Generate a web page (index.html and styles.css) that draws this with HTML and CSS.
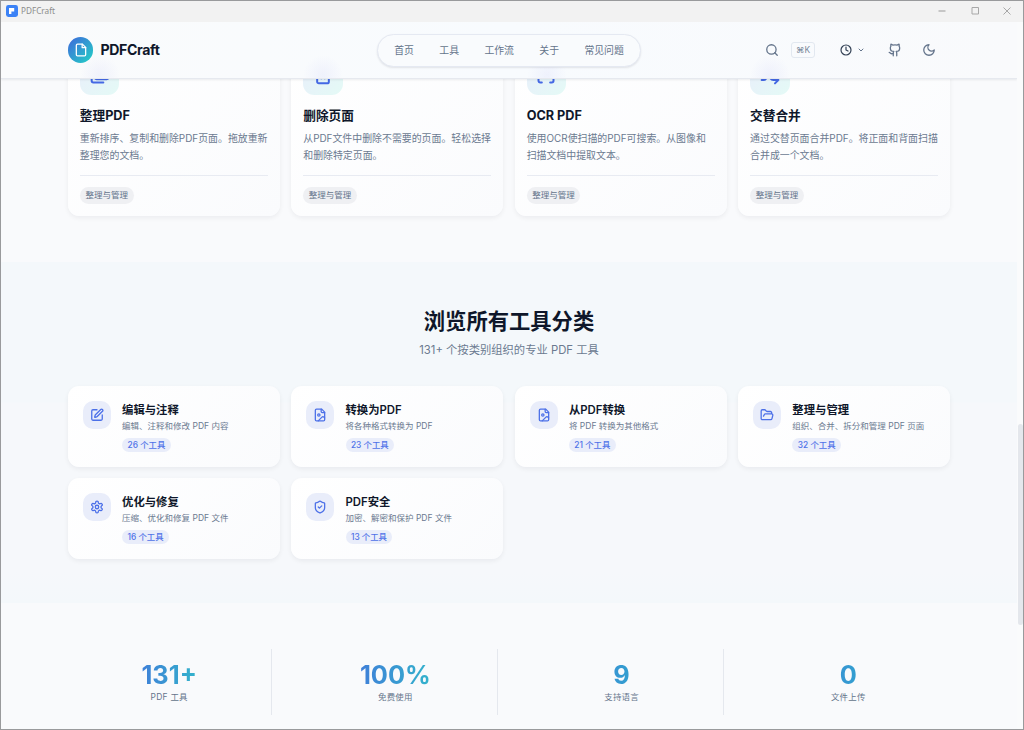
FILE: index.html
```html
<!DOCTYPE html>
<html lang="zh-CN">
<head>
    <meta charset="UTF-8">
    <meta name="viewport" content="width=device-width, initial-scale=1.0">
    <title>PDFCraft</title>
    <link rel="stylesheet" href="styles.css">
</head>
<body>
<div class="window">
    <!-- Title bar -->
    <div class="titlebar">
        <svg class="app-icon" viewBox="0 0 12 12"><rect width="12" height="12" rx="2.4" fill="#3b82f6"/><path d="M3 3h5.2v3.4H5.400V9H3z" fill="#fff"/></svg>
        <span class="app-name">PDFCraft</span>
        <div class="win-buttons">
            <svg viewBox="0 0 10 10"><path d="M1.500 5h7" stroke-width="1.200"/></svg>
            <svg viewBox="0 0 10 10"><path d="M2 1.500h6.500v6.500H2z"/></svg>
            <svg viewBox="0 0 10 10"><path d="M1.500 1.500l7 7M8.500 1.500l-7 7"/></svg>
        </div>
    </div>

    <div class="viewport">
        <div class="page">
            <!-- Header -->
            <header class="header">
                <div class="brand">
                    <span class="logo">
                        <svg class="icon" viewBox="0 0 24 24"><path d="M14.500 2H6a2 2 0 0 0-2 2v16a2 2 0 0 0 2 2h12a2 2 0 0 0 2-2V7.500z"/><path d="M14 2v6h6"/></svg>
                    </span>
                    <span class="brand-name">PDFCraft</span>
                </div>
                <nav class="nav">
                    <a>首页</a>
                    <a>工具</a>
                    <a>工作流</a>
                    <a>关于</a>
                    <a>常见问题</a>
                </nav>
                <div class="actions">
                    <svg class="icon" viewBox="0 0 24 24"><circle cx="11" cy="11" r="8"/><path d="m21 21-4.300-4.300"/></svg>
                    <kbd class="kbd">⌘K</kbd>
                    <svg class="icon clock" viewBox="0 0 24 24"><circle cx="12" cy="12" r="10"/><path d="M12 6v6l4 2"/></svg>
                    <svg class="icon chevron" viewBox="0 0 24 24"><path d="m6 9 6 6 6-6"/></svg>
                    <svg class="icon github" viewBox="0 0 24 24"><path d="M15 22v-4a4.800 4.800 0 0 0-1-3.500c3 0 6-2 6-5.500.080-1.250-.270-2.480-1-3.500.280-1.150.280-2.350 0-3.500 0 0-1 0-3 1.500-2.640-.500-5.360-.500-8 0C6 2 5 2 5 2c-.300 1.150-.300 2.350 0 3.500A5.400 5.400 0 0 0 4 9c0 3.500 3 5.500 6 5.500-.390.490-.680 1.050-.850 1.650-.170.600-.220 1.230-.150 1.850v4"/><path d="M9 18c-4.510 2-5-2-7-2"/></svg>
                    <svg class="icon moon" viewBox="0 0 24 24"><path d="M12 3a6 6 0 0 0 9 9 9 9 0 1 1-9-9Z"/></svg>
                </div>
            </header>

            <!-- Popular tools, scrolled partly under the header -->
            <section class="tools">
                <div class="grid">
                    <div class="card tool">
                        <div class="tool-icon">
                            <svg class="icon" viewBox="0 0 24 24"><path d="M20 17a2 2 0 0 0 2-2V9a2 2 0 0 0-2-2h-3.900a2 2 0 0 1-1.690-.900l-.810-1.200a2 2 0 0 0-1.670-.900H8a2 2 0 0 0-2 2v9a2 2 0 0 0 2 2Z"/><path d="M2 8v11a2 2 0 0 0 2 2h12"/></svg>
                        </div>
                        <h3>整理PDF</h3>
                        <p>重新排序、复制和删除PDF页面。拖放重新整理您的文档。</p>
                        <div class="tool-foot"><span class="tag">整理与管理</span></div>
                    </div>
                    <div class="card tool">
                        <div class="tool-icon">
                            <svg class="icon" viewBox="0 0 24 24"><path d="M3 6h18M19 6v14a2 2 0 0 1-2 2H7a2 2 0 0 1-2-2V6M8 6V4a2 2 0 0 1 2-2h4a2 2 0 0 1 2 2v2M10 11v5M14 11v5"/></svg>
                        </div>
                        <h3>删除页面</h3>
                        <p>从PDF文件中删除不需要的页面。轻松选择和删除特定页面。</p>
                        <div class="tool-foot"><span class="tag">整理与管理</span></div>
                    </div>
                    <div class="card tool">
                        <div class="tool-icon">
                            <svg class="icon" viewBox="0 0 24 24"><path d="M3 7V5a2 2 0 0 1 2-2h2M17 3h2a2 2 0 0 1 2 2v2M21 17v2a2 2 0 0 1-2 2h-2M7 21H5a2 2 0 0 1-2-2v-2"/></svg>
                        </div>
                        <h3>OCR PDF</h3>
                        <p>使用OCR使扫描的PDF可搜索。从图像和扫描文档中提取文本。</p>
                        <div class="tool-foot"><span class="tag">整理与管理</span></div>
                    </div>
                    <div class="card tool">
                        <div class="tool-icon">
                            <svg class="icon" viewBox="0 0 24 24"><path d="m18 14 4 4-4 4M18 2l4 4-4 4M2 18h1.970a4 4 0 0 0 3.300-1.700l5.460-8.600a4 4 0 0 1 3.300-1.700H22M2 6h1.970a4 4 0 0 1 3.600 2.200M22 18h-6.040a4 4 0 0 1-3.300-1.800l-.360-.450"/></svg>
                        </div>
                        <h3>交替合并</h3>
                        <p>通过交替页面合并PDF。将正面和背面扫描合并成一个文档。</p>
                        <div class="tool-foot"><span class="tag">整理与管理</span></div>
                    </div>
                </div>
            </section>

            <!-- Categories -->
            <section class="categories">
                <h2>浏览所有工具分类</h2>
                <p class="subtitle">131+ 个按类别组织的专业 PDF 工具</p>
                <div class="grid">
                    <div class="card category">
                        <div class="cat-icon">
                            <svg class="icon" viewBox="0 0 24 24"><path d="M12 3H5a2 2 0 0 0-2 2v14a2 2 0 0 0 2 2h14a2 2 0 0 0 2-2v-7"/><path d="M18.375 2.625a1 1 0 0 1 3 3l-9.013 9.014a2 2 0 0 1-.853.505l-2.873.840a.5.5 0 0 1-.620-.620l.840-2.873a2 2 0 0 1 .506-.852z"/></svg>
                        </div>
                        <div class="cat-text">
                            <h3>编辑与注释</h3>
                            <p>编辑、注释和修改 PDF 内容</p>
                            <span class="badge">26 个工具</span>
                        </div>
                    </div>
                    <div class="card category">
                        <div class="cat-icon">
                            <svg class="icon" viewBox="0 0 24 24"><path d="M15 2H6a2 2 0 0 0-2 2v16a2 2 0 0 0 2 2h12a2 2 0 0 0 2-2V7Z"/><path d="M14 2v4a2 2 0 0 0 2 2h4"/><circle cx="10" cy="12" r="2"/><path d="m20 17-1.300-1.300a2.400 2.400 0 0 0-3.400 0L9 22"/></svg>
                        </div>
                        <div class="cat-text">
                            <h3>转换为PDF</h3>
                            <p>将各种格式转换为 PDF</p>
                            <span class="badge">23 个工具</span>
                        </div>
                    </div>
                    <div class="card category">
                        <div class="cat-icon">
                            <svg class="icon" viewBox="0 0 24 24"><path d="M15 2H6a2 2 0 0 0-2 2v16a2 2 0 0 0 2 2h12a2 2 0 0 0 2-2V7Z"/><path d="M14 2v4a2 2 0 0 0 2 2h4"/><circle cx="10" cy="12" r="2"/><path d="m20 17-1.300-1.300a2.400 2.400 0 0 0-3.400 0L9 22"/></svg>
                        </div>
                        <div class="cat-text">
                            <h3>从PDF转换</h3>
                            <p>将 PDF 转换为其他格式</p>
                            <span class="badge">21 个工具</span>
                        </div>
                    </div>
                    <div class="card category">
                        <div class="cat-icon">
                            <svg class="icon" viewBox="0 0 24 24"><path d="m6 14 1.500-2.900A2 2 0 0 1 9.240 10H20a2 2 0 0 1 1.940 2.500l-1.540 6a2 2 0 0 1-1.950 1.500H4a2 2 0 0 1-2-2V5a2 2 0 0 1 2-2h3.900a2 2 0 0 1 1.690.900l.810 1.200a2 2 0 0 0 1.670.900H18a2 2 0 0 1 2 2v2"/></svg>
                        </div>
                        <div class="cat-text">
                            <h3>整理与管理</h3>
                            <p>组织、合并、拆分和管理 PDF 页面</p>
                            <span class="badge">32 个工具</span>
                        </div>
                    </div>
                    <div class="card category">
                        <div class="cat-icon">
                            <svg class="icon" viewBox="0 0 24 24"><path d="M12.220 2h-.440a2 2 0 0 0-2 2v.180a2 2 0 0 1-1 1.730l-.430.250a2 2 0 0 1-2 0l-.150-.080a2 2 0 0 0-2.730.730l-.220.380a2 2 0 0 0 .730 2.730l.150.100a2 2 0 0 1 1 1.720v.510a2 2 0 0 1-1 1.740l-.150.090a2 2 0 0 0-.730 2.730l.220.380a2 2 0 0 0 2.730.730l.150-.080a2 2 0 0 1 2 0l.430.250a2 2 0 0 1 1 1.730V20a2 2 0 0 0 2 2h.440a2 2 0 0 0 2-2v-.180a2 2 0 0 1 1-1.730l.430-.250a2 2 0 0 1 2 0l.150.080a2 2 0 0 0 2.730-.730l.220-.390a2 2 0 0 0-.730-2.730l-.150-.080a2 2 0 0 1-1-1.740v-.500a2 2 0 0 1 1-1.740l.150-.090a2 2 0 0 0 .730-2.730l-.220-.380a2 2 0 0 0-2.730-.730l-.150.080a2 2 0 0 1-2 0l-.430-.250a2 2 0 0 1-1-1.730V4a2 2 0 0 0-2-2z"/><circle cx="12" cy="12" r="3"/></svg>
                        </div>
                        <div class="cat-text">
                            <h3>优化与修复</h3>
                            <p>压缩、优化和修复 PDF 文件</p>
                            <span class="badge">16 个工具</span>
                        </div>
                    </div>
                    <div class="card category">
                        <div class="cat-icon">
                            <svg class="icon" viewBox="0 0 24 24"><path d="M20 13c0 5-3.500 7.500-7.660 8.950a1 1 0 0 1-.670-.010C7.500 20.500 4 18 4 13V6a1 1 0 0 1 1-1c2 0 4.500-1.200 6.240-2.720a1.170 1.170 0 0 1 1.520 0C14.510 3.810 17 5 19 5a1 1 0 0 1 1 1z"/><path d="m9 12 2 2 4-4"/></svg>
                        </div>
                        <div class="cat-text">
                            <h3>PDF安全</h3>
                            <p>加密、解密和保护 PDF 文件</p>
                            <span class="badge">13 个工具</span>
                        </div>
                    </div>
                </div>
            </section>

            <!-- Stats -->
            <section class="stats">
                <div class="stat"><strong>131+</strong><span>PDF 工具</span></div>
                <div class="stat"><strong>100%</strong><span>免费使用</span></div>
                <div class="stat"><strong>9</strong><span>支持语言</span></div>
                <div class="stat"><strong>0</strong><span>文件上传</span></div>
            </section>
        </div>
        <div class="scrollbar"><div class="thumb"></div></div>
    </div>
</div>
</body>
</html>
```
FILE: styles.css
```css
* {
    box-sizing: border-box;
    margin: 0;
    padding: 0;
}

body {
    font-family: Inter, "Noto Sans CJK SC", sans-serif;
    color: #0f172a;
    background: #f9fafc;
}

.window {
    width: 1024px;
    height: 730px;
    border: 1px solid #999a9c;
    display: flex;
    flex-direction: column;
    overflow: hidden;
}

.icon {
    display: block;
    flex: none;
    width: 14px;
    height: 14px;
    fill: none;
    stroke: currentColor;
    stroke-width: 2.2;
    stroke-linecap: round;
    stroke-linejoin: round;
}

/* Title bar */
.titlebar {
    flex: none;
    height: 21px;
    display: flex;
    align-items: center;
    padding: 0 11px 2px 5px;
    background: #f2f2f2;
}

.app-icon {
    width: 12px;
    height: 12px;
}

.app-name {
    margin-left: 3px;
    font: 8.2px "Noto Sans", sans-serif;
    color: #8c8c8c;
}

.win-buttons {
    margin-left: auto;
    display: flex;
    gap: 22.5px;
}

.win-buttons svg {
    width: 10px;
    height: 10px;
    fill: none;
    stroke: #a8a8a8;
    stroke-width: 1;
}

.viewport {
    flex: 1;
    min-height: 0;
    display: flex;
}

.page {
    width: 1016px;
    overflow: hidden;
}

/* Header */
.header {
    position: relative;
    height: 57px;
    padding: 0 67px;
    display: grid;
    grid-template-columns: 1fr auto 1fr;
    align-items: center;
    background:
        radial-gradient(circle at 99px 53px, rgba(79, 90, 229, 0.06), transparent 20px),
        radial-gradient(circle at 322px 53px, rgba(79, 90, 229, 0.06), transparent 20px),
        radial-gradient(circle at 546px 53px, rgba(79, 90, 229, 0.06), transparent 20px),
        radial-gradient(circle at 769px 53px, rgba(79, 90, 229, 0.06), transparent 20px),
        linear-gradient(90deg, #fafbfc, #f8fbfe 50%, #f9fafc);
    border-bottom: 1px solid #e6e9ef;
    box-shadow: 0 1px 2px rgba(15, 23, 42, 0.08);
}

.brand {
    display: flex;
    align-items: center;
    gap: 7px;
}

.logo {
    width: 25.4px;
    height: 25.4px;
    border-radius: 50%;
    display: flex;
    align-items: center;
    justify-content: center;
    color: #fff;
    background: linear-gradient(135deg, #3f67dc, #22d3c5);
}

.brand-name {
    font-size: 14.1px;
    font-weight: 700;
    letter-spacing: -0.35px;
}

.nav {
    height: 33px;
    padding: 0 16px;
    display: flex;
    align-items: center;
    gap: 25.4px;
    border: 1px solid #e5e9f2;
    border-radius: 17px;
    background: #f9fbfd;
    box-shadow: 0 1px 2px rgba(15, 23, 42, 0.1);
    font-size: 9.86px;
    font-weight: 400;
    color: #64748b;
}

.actions {
    display: flex;
    align-items: center;
    justify-content: flex-end;
    padding-right: 14px;
    color: #64748b;
}

.kbd {
    width: 24px;
    height: 16px;
    margin: 0 25px 0 12px;
    display: flex;
    align-items: center;
    justify-content: center;
    border: 1px solid #e2e8f0;
    border-radius: 3px;
    font: 400 8.45px Inter, "DejaVu Sans", sans-serif;
    color: #7b889b;
}

.clock {
    width: 12px;
    height: 12px;
    color: #334155;
    stroke-width: 2.4;
}

.chevron {
    width: 8px;
    height: 8px;
    margin-left: 5px;
    stroke-width: 3;
}

.github {
    margin-left: 22.5px;
}

.moon {
    margin-left: 20.5px;
}

/* Cards */
.grid {
    display: grid;
    grid-template-columns: repeat(4, 1fr);
    gap: 11.3px;
    width: 882.4px;
    margin: 0 auto;
}

.card {
    border-radius: 11.3px;
    background: linear-gradient(135deg, #fff, #fafbfd);
    box-shadow: 0 2px 5px rgba(15, 23, 42, 0.06);
}

.tools {
    height: 183px;
    padding-bottom: 46px;
    display: flex;
    flex-direction: column;
    justify-content: flex-end;
    overflow: hidden;
}

.tool {
    padding: 12px;
}

.tool-icon {
    width: 39.5px;
    height: 40px;
    border-radius: 11.3px;
    display: flex;
    align-items: center;
    justify-content: center;
    color: #4468e4;
    background: linear-gradient(135deg, #e9edfb, #e4faf6);
}

.tool-icon .icon {
    width: 20px;
    height: 20px;
    stroke-width: 2.4;
}

.tool h3 {
    margin-top: 12px;
    font-size: 12.68px;
    line-height: 18px;
    font-weight: 700;
}

.tool p {
    margin-top: 5.5px;
    font-size: 9.92px;
    line-height: 16.5px;
    color: #6b7a90;
}

.tool-foot {
    margin-top: 11.5px;
    padding-top: 11.5px;
    border-top: 1px solid #e8ebf2;
    display: flex;
}

.tag {
    height: 17px;
    padding: 0 5.6px;
    border-radius: 9px;
    font-size: 8.5px;
    line-height: 17.5px;
    font-weight: 400;
    color: #64748b;
    background: #eff0f3;
}

/* Categories */
.categories {
    height: 341px;
    padding-top: 43px;
    text-align: center;
    background: linear-gradient(180deg, #f4f8fb 0, #f4f8fb 140px, #f6f8fb 141px, #f6f8fb 310px, #f4f8fb);
}

.categories h2 {
    font-size: 21.3px;
    line-height: 32px;
    font-weight: 700;
}

.subtitle {
    margin: 5px 0 27px;
    font-size: 11.3px;
    line-height: 17px;
    color: #6b7a90;
}

.category {
    height: 81px;
    padding: 15px;
    display: flex;
    gap: 11.3px;
    text-align: left;
}

.cat-icon {
    flex: none;
    width: 28px;
    height: 28px;
    border-radius: 10px;
    display: flex;
    align-items: center;
    justify-content: center;
    color: #4c70e8;
    background: #e9edfa;
}

.cat-text h3 {
    padding-top: 1px;
    font-size: 11.35px;
    line-height: 17px;
    font-weight: 600;
}

.cat-text p {
    margin-bottom: 4px;
    font-size: 8.5px;
    line-height: 15px;
    color: #6b7a90;
    white-space: nowrap;
}

.badge {
    display: block;
    width: fit-content;
    height: 14px;
    padding: 0 5.4px;
    border-radius: 7px;
    font-size: 8.4px;
    line-height: 14px;
    font-weight: 500;
    color: #4f72e8;
    background: #e9edfa;
}

/* Stats */
.stats {
    width: 882.4px;
    margin: 46px auto 0;
    display: grid;
    grid-template-columns: repeat(4, 1fr);
    gap: 22.5px;
}

.stat {
    height: 66px;
    padding-top: 12px;
    display: flex;
    flex-direction: column;
    align-items: center;
    border-right: 1px solid #e5e8ee;
}

.stat:last-child {
    border-right: 0;
}

.stat strong {
    font-size: 25.36px;
    line-height: 28px;
    font-weight: 700;
    color: transparent;
    background: linear-gradient(90deg, #3f7fd8, #33b3cc);
    background-clip: text;
    -webkit-background-clip: text;
}

.stat:nth-child(n+3) strong {
    background-image: linear-gradient(90deg, #3795d3, #339fd0);
}

.stat span {
    margin-top: 2px;
    font-size: 8.45px;
    line-height: 12px;
    font-weight: 400;
    letter-spacing: 0.25px;
    color: #64748b;
}

/* Scrollbar */
.scrollbar {
    flex: 1;
    padding: 402px 0 0 1px;
    background: #fafbfc;
}

.thumb {
    height: 201px;
    border-radius: 3px;
    background: #e4e7ec;
}
```
